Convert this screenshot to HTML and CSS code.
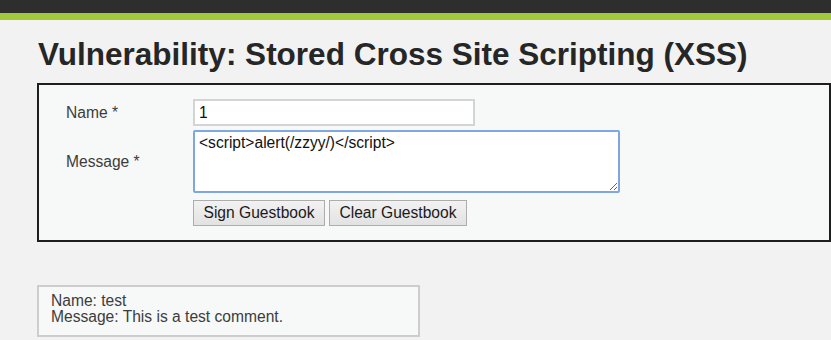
FILE: index.html
```html
<!DOCTYPE html>
<html>
<head>
<title>Vulnerability: Stored Cross Site Scripting (XSS)</title>
<meta charset="utf-8">
<link rel="stylesheet" href="styles.css">
</head>
<body>

<div class="header"></div>

<div class="main">
	<h1>Vulnerability: Stored Cross Site Scripting (XSS)</h1>

	<div class="code_area">
		<form class="guestform">
			<label class="lbl" for="txtName">Name *</label>
			<input class="txt_name" type="text" id="txtName" value="1">

			<label class="lbl" for="mtxMessage">Message *</label>
			<textarea class="txt_msg" id="mtxMessage">&lt;script&gt;alert(/zzyy/)&lt;/script&gt;</textarea>

			<span></span>
			<div class="btns">
				<button type="button" class="btn">Sign Guestbook</button>
				<button type="button" class="btn">Clear Guestbook</button>
			</div>
		</form>
	</div>

	<div class="comment">
		Name: test<br>
		Message: This is a test comment.
	</div>
</div>

</body>
</html>
```

FILE: styles.css
```css
body {
	margin: 0;
	background: #f2f2f2;
	font-family: "Liberation Sans", Arial, sans-serif;
	font-size: 15.6px;
	color: #333;
}

.header {
	height: 13px;
	background: #2e2e2e;
	border-bottom: 7px solid #a2c93a;
}

.main {
	padding-left: 37px;
}

h1 {
	font-size: 31.5px;
	line-height: 36px;
	color: #262626;
	margin: 16px 0 11px 1px;
}

/*  form area  */
.code_area {
	border: 2px solid #1e1e1e;
	background: #f7f8f8;
	padding: 14px 0 14px 27px;
}

.guestform {
	display: grid;
	grid-template-columns: 127px auto;
	justify-content: start;
	row-gap: 4px;
}

.lbl {
	align-self: center;
	color: #3c3c3c;
}

.txt_name {
	width: 282px;
	height: 27px;
	box-sizing: border-box;
	border: 2px solid #d4d4d4;
	background: #fff;
	font: inherit;
	color: #111;
	padding: 0 4px;
	outline: none;
}

.txt_msg {
	width: 427px;
	height: 63px;
	box-sizing: border-box;
	border: 2px solid #7ea6e0;
	border-radius: 2px;
	background: #fff;
	font: inherit;
	color: #111;
	padding: 2px 4px;
	outline: none;
}

.btns {
	display: flex;
	gap: 4px;
	margin-top: 3px;
}

.btn {
	height: 26px;
	box-sizing: border-box;
	border: 1px solid #adadad;
	background: linear-gradient(#f2f2f2, #e2e2e2);
	font: inherit;
	color: #1a1a1a;
	padding: 0 9.5px;
}

/*  guestbook entry  */
.comment {
	width: 383px;
	box-sizing: border-box;
	margin-top: 43px;
	border: 2px solid #cdcdcd;
	background: #f7f8f8;
	padding: 6px 12px 10px;
	line-height: 16px;
	color: #3c3c3c;
}
```
